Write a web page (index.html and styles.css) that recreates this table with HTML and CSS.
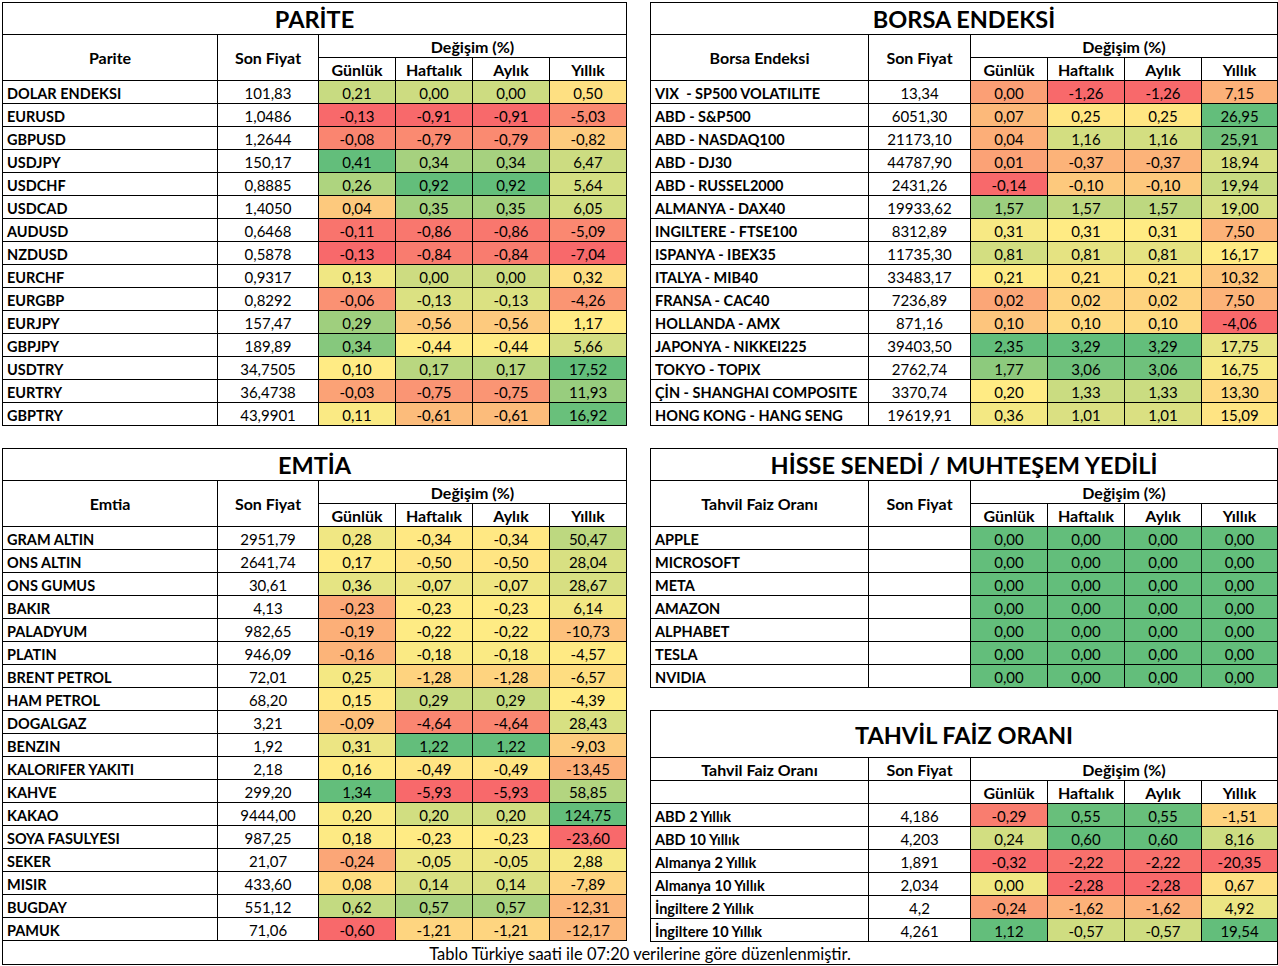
FILE: index.html
```html
<!DOCTYPE html>
<html lang="tr">
<head>
<meta charset="utf-8">
<title>Piyasa Tablosu</title>
<link rel="stylesheet" href="styles.css">
</head>
<body>
<div class="sheet">
  <div class="panels">
    <table class="tbl scale left">
      <colgroup><col class="c-name"><col class="c-price"><col class="c-ch"><col class="c-ch"><col class="c-ch"><col class="c-last"></colgroup>
      <thead>
        <tr class="r-title"><th colspan="6" class="title">PARİTE</th></tr>
        <tr><th rowspan="2">Parite</th><th rowspan="2">Son Fiyat</th><th colspan="4">Değişim (%)</th></tr>
        <tr><th>Günlük</th><th>Haftalık</th><th>Aylık</th><th>Yıllık</th></tr>
      </thead>
      <tbody>
        <tr><td>DOLAR ENDEKSI</td><td>101,83</td><td>0,21</td><td>0,00</td><td>0,00</td><td>0,50</td></tr>
        <tr><td>EURUSD</td><td>1,0486</td><td>-0,13</td><td>-0,91</td><td>-0,91</td><td>-5,03</td></tr>
        <tr><td>GBPUSD</td><td>1,2644</td><td>-0,08</td><td>-0,79</td><td>-0,79</td><td>-0,82</td></tr>
        <tr><td>USDJPY</td><td>150,17</td><td>0,41</td><td>0,34</td><td>0,34</td><td>6,47</td></tr>
        <tr><td>USDCHF</td><td>0,8885</td><td>0,26</td><td>0,92</td><td>0,92</td><td>5,64</td></tr>
        <tr><td>USDCAD</td><td>1,4050</td><td>0,04</td><td>0,35</td><td>0,35</td><td>6,05</td></tr>
        <tr><td>AUDUSD</td><td>0,6468</td><td>-0,11</td><td>-0,86</td><td>-0,86</td><td>-5,09</td></tr>
        <tr><td>NZDUSD</td><td>0,5878</td><td>-0,13</td><td>-0,84</td><td>-0,84</td><td>-7,04</td></tr>
        <tr><td>EURCHF</td><td>0,9317</td><td>0,13</td><td>0,00</td><td>0,00</td><td>0,32</td></tr>
        <tr><td>EURGBP</td><td>0,8292</td><td>-0,06</td><td>-0,13</td><td>-0,13</td><td>-4,26</td></tr>
        <tr><td>EURJPY</td><td>157,47</td><td>0,29</td><td>-0,56</td><td>-0,56</td><td>1,17</td></tr>
        <tr><td>GBPJPY</td><td>189,89</td><td>0,34</td><td>-0,44</td><td>-0,44</td><td>5,66</td></tr>
        <tr><td>USDTRY</td><td>34,7505</td><td>0,10</td><td>0,17</td><td>0,17</td><td>17,52</td></tr>
        <tr><td>EURTRY</td><td>36,4738</td><td>-0,03</td><td>-0,75</td><td>-0,75</td><td>11,93</td></tr>
        <tr><td>GBPTRY</td><td>43,9901</td><td>0,11</td><td>-0,61</td><td>-0,61</td><td>16,92</td></tr>
      </tbody>
    </table>

    <table class="tbl scale right">
      <colgroup><col class="c-name"><col class="c-price"><col class="c-ch"><col class="c-ch"><col class="c-ch"><col class="c-last"></colgroup>
      <thead>
        <tr class="r-title"><th colspan="6" class="title">BORSA ENDEKSİ</th></tr>
        <tr><th rowspan="2">Borsa Endeksi</th><th rowspan="2">Son Fiyat</th><th colspan="4">Değişim (%)</th></tr>
        <tr><th>Günlük</th><th>Haftalık</th><th>Aylık</th><th>Yıllık</th></tr>
      </thead>
      <tbody>
        <tr><td>VIX&nbsp; - SP500 VOLATILITE</td><td>13,34</td><td>0,00</td><td>-1,26</td><td>-1,26</td><td>7,15</td></tr>
        <tr><td>ABD - S&amp;P500</td><td>6051,30</td><td>0,07</td><td>0,25</td><td>0,25</td><td>26,95</td></tr>
        <tr><td>ABD - NASDAQ100</td><td>21173,10</td><td>0,04</td><td>1,16</td><td>1,16</td><td>25,91</td></tr>
        <tr><td>ABD - DJ30</td><td>44787,90</td><td>0,01</td><td>-0,37</td><td>-0,37</td><td>18,94</td></tr>
        <tr><td>ABD - RUSSEL2000</td><td>2431,26</td><td>-0,14</td><td>-0,10</td><td>-0,10</td><td>19,94</td></tr>
        <tr><td>ALMANYA - DAX40</td><td>19933,62</td><td>1,57</td><td>1,57</td><td>1,57</td><td>19,00</td></tr>
        <tr><td>INGILTERE - FTSE100</td><td>8312,89</td><td>0,31</td><td>0,31</td><td>0,31</td><td>7,50</td></tr>
        <tr><td>ISPANYA - IBEX35</td><td>11735,30</td><td>0,81</td><td>0,81</td><td>0,81</td><td>16,17</td></tr>
        <tr><td>ITALYA - MIB40</td><td>33483,17</td><td>0,21</td><td>0,21</td><td>0,21</td><td>10,32</td></tr>
        <tr><td>FRANSA - CAC40</td><td>7236,89</td><td>0,02</td><td>0,02</td><td>0,02</td><td>7,50</td></tr>
        <tr><td>HOLLANDA - AMX</td><td>871,16</td><td>0,10</td><td>0,10</td><td>0,10</td><td>-4,06</td></tr>
        <tr><td>JAPONYA - NIKKEI225</td><td>39403,50</td><td>2,35</td><td>3,29</td><td>3,29</td><td>17,75</td></tr>
        <tr><td>TOKYO - TOPIX</td><td>2762,74</td><td>1,77</td><td>3,06</td><td>3,06</td><td>16,75</td></tr>
        <tr><td>ÇİN - SHANGHAI COMPOSITE</td><td>3370,74</td><td>0,20</td><td>1,33</td><td>1,33</td><td>13,30</td></tr>
        <tr><td>HONG KONG - HANG SENG</td><td>19619,91</td><td>0,36</td><td>1,01</td><td>1,01</td><td>15,09</td></tr>
      </tbody>
    </table>

    <table class="tbl scale left">
      <colgroup><col class="c-name"><col class="c-price"><col class="c-ch"><col class="c-ch"><col class="c-ch"><col class="c-last"></colgroup>
      <thead>
        <tr class="r-title"><th colspan="6" class="title">EMTİA</th></tr>
        <tr><th rowspan="2">Emtia</th><th rowspan="2">Son Fiyat</th><th colspan="4">Değişim (%)</th></tr>
        <tr><th>Günlük</th><th>Haftalık</th><th>Aylık</th><th>Yıllık</th></tr>
      </thead>
      <tbody>
        <tr><td>GRAM ALTIN</td><td>2951,79</td><td>0,28</td><td>-0,34</td><td>-0,34</td><td>50,47</td></tr>
        <tr><td>ONS ALTIN</td><td>2641,74</td><td>0,17</td><td>-0,50</td><td>-0,50</td><td>28,04</td></tr>
        <tr><td>ONS GUMUS</td><td>30,61</td><td>0,36</td><td>-0,07</td><td>-0,07</td><td>28,67</td></tr>
        <tr><td>BAKIR</td><td>4,13</td><td>-0,23</td><td>-0,23</td><td>-0,23</td><td>6,14</td></tr>
        <tr><td>PALADYUM</td><td>982,65</td><td>-0,19</td><td>-0,22</td><td>-0,22</td><td>-10,73</td></tr>
        <tr><td>PLATIN</td><td>946,09</td><td>-0,16</td><td>-0,18</td><td>-0,18</td><td>-4,57</td></tr>
        <tr><td>BRENT PETROL</td><td>72,01</td><td>0,25</td><td>-1,28</td><td>-1,28</td><td>-6,57</td></tr>
        <tr><td>HAM PETROL</td><td>68,20</td><td>0,15</td><td>0,29</td><td>0,29</td><td>-4,39</td></tr>
        <tr><td>DOGALGAZ</td><td>3,21</td><td>-0,09</td><td>-4,64</td><td>-4,64</td><td>28,43</td></tr>
        <tr><td>BENZIN</td><td>1,92</td><td>0,31</td><td>1,22</td><td>1,22</td><td>-9,03</td></tr>
        <tr><td>KALORIFER YAKITI</td><td>2,18</td><td>0,16</td><td>-0,49</td><td>-0,49</td><td>-13,45</td></tr>
        <tr><td>KAHVE</td><td>299,20</td><td>1,34</td><td>-5,93</td><td>-5,93</td><td>58,85</td></tr>
        <tr><td>KAKAO</td><td>9444,00</td><td>0,20</td><td>0,20</td><td>0,20</td><td>124,75</td></tr>
        <tr><td>SOYA FASULYESI</td><td>987,25</td><td>0,18</td><td>-0,23</td><td>-0,23</td><td>-23,60</td></tr>
        <tr><td>SEKER</td><td>21,07</td><td>-0,24</td><td>-0,05</td><td>-0,05</td><td>2,88</td></tr>
        <tr><td>MISIR</td><td>433,60</td><td>0,08</td><td>0,14</td><td>0,14</td><td>-7,89</td></tr>
        <tr><td>BUGDAY</td><td>551,12</td><td>0,62</td><td>0,57</td><td>0,57</td><td>-12,31</td></tr>
        <tr><td>PAMUK</td><td>71,06</td><td>-0,60</td><td>-1,21</td><td>-1,21</td><td>-12,17</td></tr>
      </tbody>
    </table>

    <div class="stack">
      <table class="tbl scale right">
        <colgroup><col class="c-name"><col class="c-price"><col class="c-ch"><col class="c-ch"><col class="c-ch"><col class="c-last"></colgroup>
        <thead>
          <tr class="r-title"><th colspan="6" class="title">HİSSE SENEDİ / MUHTEŞEM YEDİLİ</th></tr>
          <tr><th rowspan="2">Tahvil Faiz Oranı</th><th rowspan="2">Son Fiyat</th><th colspan="4">Değişim (%)</th></tr>
          <tr><th>Günlük</th><th>Haftalık</th><th>Aylık</th><th>Yıllık</th></tr>
        </thead>
        <tbody>
          <tr><td>APPLE</td><td></td><td>0,00</td><td>0,00</td><td>0,00</td><td>0,00</td></tr>
          <tr><td>MICROSOFT</td><td></td><td>0,00</td><td>0,00</td><td>0,00</td><td>0,00</td></tr>
          <tr><td>META</td><td></td><td>0,00</td><td>0,00</td><td>0,00</td><td>0,00</td></tr>
          <tr><td>AMAZON</td><td></td><td>0,00</td><td>0,00</td><td>0,00</td><td>0,00</td></tr>
          <tr><td>ALPHABET</td><td></td><td>0,00</td><td>0,00</td><td>0,00</td><td>0,00</td></tr>
          <tr><td>TESLA</td><td></td><td>0,00</td><td>0,00</td><td>0,00</td><td>0,00</td></tr>
          <tr><td>NVIDIA</td><td></td><td>0,00</td><td>0,00</td><td>0,00</td><td>0,00</td></tr>
        </tbody>
      </table>

      <table class="tbl scale right">
        <colgroup><col class="c-name"><col class="c-price"><col class="c-ch"><col class="c-ch"><col class="c-ch"><col class="c-last"></colgroup>
        <thead>
          <tr class="r-title tall"><th colspan="6" class="title">TAHVİL FAİZ ORANI</th></tr>
          <tr><th>Tahvil Faiz Oranı</th><th>Son Fiyat</th><th colspan="4">Değişim (%)</th></tr>
          <tr><th></th><th></th><th>Günlük</th><th>Haftalık</th><th>Aylık</th><th>Yıllık</th></tr>
        </thead>
        <tbody>
          <tr><td>ABD 2 Yıllık</td><td>4,186</td><td>-0,29</td><td>0,55</td><td>0,55</td><td>-1,51</td></tr>
          <tr><td>ABD 10 Yıllık</td><td>4,203</td><td>0,24</td><td>0,60</td><td>0,60</td><td>8,16</td></tr>
          <tr><td>Almanya 2 Yıllık</td><td>1,891</td><td>-0,32</td><td>-2,22</td><td>-2,22</td><td>-20,35</td></tr>
          <tr><td>Almanya 10 Yıllık</td><td>2,034</td><td>0,00</td><td>-2,28</td><td>-2,28</td><td>0,67</td></tr>
          <tr><td>İngiltere 2 Yıllık</td><td>4,2</td><td>-0,24</td><td>-1,62</td><td>-1,62</td><td>4,92</td></tr>
          <tr><td>İngiltere 10 Yıllık</td><td>4,261</td><td>1,12</td><td>-0,57</td><td>-0,57</td><td>19,54</td></tr>
        </tbody>
      </table>
    </div>
  </div>
  <div class="footer">Tablo Türkiye saati ile 07:20 verilerine göre düzenlenmiştir.</div>
</div>
<script src="script.js"></script>
</body>
</html>
```

FILE: styles.css
```css
html, body {
  margin: 0;
  padding: 0;
  background: #ffffff;
}

body {
  font-family: Lato, "Open Sans", sans-serif;
  font-size: 15px;
  color: #000000;
}

.sheet {
  padding: 2px 0 0 2px;
  width: 1276px;
}

.panels {
  display: grid;
  grid-template-columns: 625px 628px;
  column-gap: 23px;
  row-gap: 22px;
  align-items: start;
}

.stack {
  display: flex;
  flex-direction: column;
  gap: 22px;
}

.tbl {
  border-collapse: collapse;
  table-layout: fixed;
  width: 100%;
}

.tbl.left col.c-name { width: 215px; }
.tbl.left col.c-price { width: 101px; }
.tbl.right col.c-name { width: 218px; }
.tbl.right col.c-price { width: 102px; }
.tbl col.c-ch { width: 77px; }

.tbl th,
.tbl td {
  border: 1px solid #000000;
  padding: 1px 0 0 0;
  height: 21px;
  line-height: 16px;
  text-align: center;
  vertical-align: middle;
  white-space: nowrap;
  overflow: hidden;
}

.tbl th {
  font-weight: 700;
  font-size: 16px;
}

.tbl tr.r-title th {
  height: 31px;
  font-size: 23.5px;
  line-height: 28px;
  padding: 0;
}

.tbl tr.r-title.tall th {
  height: 45px;
  padding-top: 1px;
}

.tbl tbody td {
  vertical-align: baseline;
  padding-top: 4px;
  height: 18px;
}

.tbl tbody td:first-child {
  text-align: left;
  font-weight: 700;
  font-size: 14.5px;
  padding-left: 4px;
}

.footer {
  width: 1276px;
  height: 24px;
  box-sizing: border-box;
  border-left: 1px solid #000000;
  border-right: 1px solid #000000;
  border-bottom: 1px solid #000000;
  text-align: center;
  font-size: 16.5px;
  line-height: 17px;
  margin-top: -1px;
  padding-top: 5px;
}
```

FILE: script.js
```js
(function () {
  var RED = [248, 105, 107];
  var YELLOW = [255, 235, 132];
  var GREEN = [99, 190, 123];

  function mix(a, b, t) {
    return [0, 1, 2].map(function (i) {
      return Math.round(a[i] + (b[i] - a[i]) * t);
    });
  }

  function colorFor(v, min, mid, max) {
    if (max === min) return GREEN;
    if (v <= mid) {
      if (mid === min) return YELLOW;
      return mix(RED, YELLOW, (v - min) / (mid - min));
    }
    if (max === mid) return YELLOW;
    return mix(YELLOW, GREEN, (v - mid) / (max - mid));
  }

  var tables = document.querySelectorAll('table.scale');
  Array.prototype.forEach.call(tables, function (t) {
    var rows = Array.prototype.slice.call(t.tBodies[0].rows);
    for (var c = 2; c < 6; c++) {
      var cells = rows.map(function (r) { return r.cells[c]; });
      var vals = cells.map(function (td) {
        return parseFloat(td.textContent.replace(',', '.'));
      });
      var sorted = vals.slice().sort(function (a, b) { return a - b; });
      var n = sorted.length;
      var rank = (n - 1) * 0.5;
      var lo = Math.floor(rank);
      var hi = Math.ceil(rank);
      var mid = sorted[lo] + (sorted[hi] - sorted[lo]) * (rank - lo);
      var min = sorted[0];
      var max = sorted[n - 1];
      cells.forEach(function (td, i) {
        var col = colorFor(vals[i], min, mid, max);
        td.style.backgroundColor = 'rgb(' + col.join(',') + ')';
      });
    }
  });
})();
```
